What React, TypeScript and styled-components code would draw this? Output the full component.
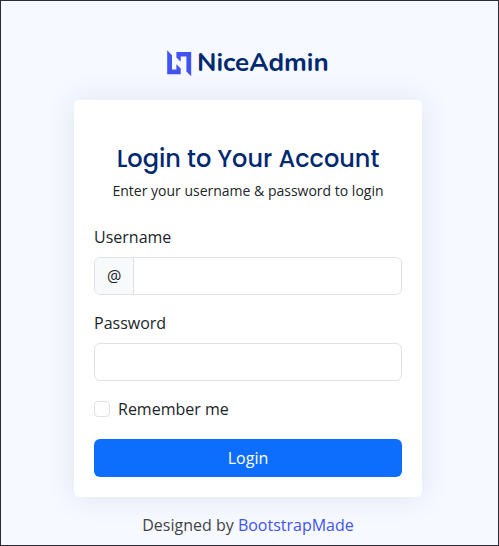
import React from "react";
import styled, { createGlobalStyle } from "styled-components";

const GlobalStyle = createGlobalStyle`
  *, *::before, *::after { box-sizing: border-box; }
  body {
    margin: 0;
    background: #f6f9ff;
    color: #212529;
    font-family: "Open Sans", sans-serif;
    font-size: 16px;
    line-height: 24px;
  }
`;

const Page = styled.main`
  display: flex;
  flex-direction: column;
  align-items: center;
  height: 546px;
  padding: 45px 3px 0 0;
  border: 1px solid #2b2b34;
  background: #f6f9ff;
  overflow: hidden;
`;

const Brand = styled.a`
  display: flex;
  align-items: center;
  gap: 5px;
  height: 34px;
  margin-bottom: 20px;
  color: #012970;
  text-decoration: none;
`;

const BrandName = styled.span`
  width: 132px;
  font-family: Nunito, Lato, sans-serif;
  font-size: 26px;
  font-weight: 700;
  line-height: 34px;
  white-space: nowrap;
`;

const Card = styled.section`
  width: 348px;
  height: 397px;
  padding: 44px 20px 20px;
  border-radius: 5px;
  background: #fff;
  box-shadow: 0 0 30px rgba(1, 41, 112, 0.1);
`;

const Title = styled.h1`
  margin: 0;
  color: #012970;
  font-family: Poppins, Inter, sans-serif;
  font-size: 24px;
  font-weight: 500;
  line-height: 29px;
  text-align: center;
  white-space: nowrap;
`;

const Subtitle = styled.p`
  margin: 7px 0 24px;
  font-size: 14px;
  line-height: 21px;
  text-align: center;
`;

const Form = styled.form`
  display: flex;
  flex-direction: column;
  gap: 16px;
`;

const Field = styled.div`
  display: flex;
  flex-direction: column;
  gap: 8px;
`;

const InputGroup = styled.div`
  display: flex;
  height: 38px;
  border: 1px solid #dee2e6;
  border-radius: 6px;
  background: #fff;
  overflow: hidden;
`;

const Prefix = styled.span`
  padding: 6px 12px;
  border-right: 1px solid #dee2e6;
  background: #f8f9fa;
`;

const Input = styled.input`
  flex: 1;
  min-width: 0;
  padding: 6px 12px;
  border: 0;
  outline: 0;
  background: transparent;
  font: inherit;
`;

const Remember = styled.label`
  display: flex;
  align-items: center;
  gap: 8px;
  height: 24px;
  margin-bottom: 2px;
`;

const Checkbox = styled.input`
  appearance: none;
  width: 16px;
  height: 16px;
  margin: 0;
  border: 1px solid #dee2e6;
  border-radius: 4px;
  background: #fff;
`;

const Button = styled.button`
  height: 38px;
  padding: 6px 12px;
  border: 0;
  border-radius: 6px;
  background: #0d6efd;
  color: #fff;
  font: inherit;
`;

const Credits = styled.footer`
  margin-top: 16px;
  color: #444;
`;

const Link = styled.a`
  color: #4154f1;
  text-decoration: none;
`;

const Logo = () => (
  <svg width="25" height="27" viewBox="0 0 25 27" aria-hidden="true">
    <path
      fill="#4154f1"
      d="M0.2 0.2L5 5.2V19.6H9.4V14.2L13.7 18.4V24.2H0.2ZM9.4 2.1H24.2V26.2L19.4 21.4V6.6H13.7V11.8L9.4 7.6Z"
    />
  </svg>
);

export default function App() {
  return (
    <>
      <GlobalStyle />
      <Page>
        <Brand>
          <Logo />
          <BrandName>NiceAdmin</BrandName>
        </Brand>
        <Card>
          <Title>Login to Your Account</Title>
          <Subtitle>Enter your username &amp; password to login</Subtitle>
          <Form onSubmit={(event) => event.preventDefault()}>
            <Field>
              <label htmlFor="username">Username</label>
              <InputGroup>
                <Prefix>@</Prefix>
                <Input id="username" type="text" />
              </InputGroup>
            </Field>
            <Field>
              <label htmlFor="password">Password</label>
              <InputGroup>
                <Input id="password" type="password" />
              </InputGroup>
            </Field>
            <Remember>
              <Checkbox type="checkbox" />
              Remember me
            </Remember>
            <Button type="submit">Login</Button>
          </Form>
        </Card>
        <Credits>
          Designed by <Link>BootstrapMade</Link>
        </Credits>
      </Page>
    </>
  );
}
